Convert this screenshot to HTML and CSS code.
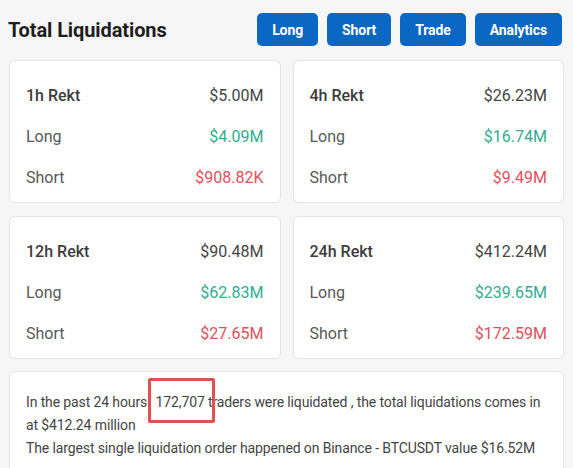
FILE: index.html
```html
<!DOCTYPE html>
<html>
<head>
<meta charset="utf-8">
<link rel="stylesheet" href="styles.css">
</head>
<body>
<div class="page">
  <header class="top">
    <h1 class="title">Total Liquidations</h1>
    <nav class="btns">
      <a class="btn">Long</a>
      <a class="btn">Short</a>
      <a class="btn">Trade</a>
      <a class="btn">Analytics</a>
    </nav>
  </header>
  <section class="grid">
    <div class="card">
      <div class="row head"><span>1h Rekt</span><span class="val">$5.00M</span></div>
      <div class="row"><span>Long</span><span class="val up">$4.09M</span></div>
      <div class="row"><span>Short</span><span class="val down">$908.82K</span></div>
    </div>
    <div class="card">
      <div class="row head"><span>4h Rekt</span><span class="val">$26.23M</span></div>
      <div class="row"><span>Long</span><span class="val up">$16.74M</span></div>
      <div class="row"><span>Short</span><span class="val down">$9.49M</span></div>
    </div>
    <div class="card">
      <div class="row head"><span>12h Rekt</span><span class="val">$90.48M</span></div>
      <div class="row"><span>Long</span><span class="val up">$62.83M</span></div>
      <div class="row"><span>Short</span><span class="val down">$27.65M</span></div>
    </div>
    <div class="card">
      <div class="row head"><span>24h Rekt</span><span class="val">$412.24M</span></div>
      <div class="row"><span>Long</span><span class="val up">$239.65M</span></div>
      <div class="row"><span>Short</span><span class="val down">$172.59M</span></div>
    </div>
  </section>
  <section class="summary">
    <p>In the past 24 hours <span class="hl">172,707</span> traders were liquidated , the total liquidations comes in at $412.24 million</p>
    <p>The largest single liquidation order happened on Binance - BTCUSDT value $16.52M</p>
    <div class="mark"></div>
  </section>
</div>
</body>
</html>
```

FILE: styles.css
```css
html, body {
  margin: 0;
  padding: 0;
  background: #f6f6f6;
}
body {
  font-family: Roboto, "Liberation Sans", sans-serif;
  color: #333;
  width: 573px;
  height: 468px;
  overflow: hidden;
}
.page {
  padding: 0 9px 0 9px;
}
.top {
  display: flex;
  align-items: center;
  justify-content: space-between;
  height: 58px;
  padding-top: 1px;
  box-sizing: border-box;
}
.title {
  margin: 0 0 0 -1px;
  font-size: 20px;
  font-weight: 700;
  color: #1e1e1e;
  letter-spacing: -0.1px;
}
.btns {
  display: flex;
  gap: 9px;
  margin-right: 2px;
}
.btn {
  display: flex;
  align-items: center;
  justify-content: center;
  height: 33px;
  padding: 0 15px;
  background: #0b67c4;
  color: #fff;
  font-size: 14px;
  font-weight: 700;
  letter-spacing: -0.1px;
  border-radius: 5px;
}
.grid {
  display: grid;
  grid-template-columns: 1fr 1fr;
  column-gap: 12px;
  row-gap: 13px;
  margin-top: 2px;
}
.card {
  background: #fff;
  border: 1px solid #e4e4e4;
  border-radius: 6px;
  padding: 14px 16px 4px 16px;
}
.row {
  display: flex;
  justify-content: space-between;
  align-items: center;
  height: 41px;
  font-size: 16px;
  color: #585858;
}
.row.head {
  color: #3c3c3c;
  font-weight: 500;
}
.val {
  color: #444;
  font-weight: 400;
}
.val.up { color: #2fae90; }
.val.down { color: #e0505c; }
.summary {
  position: relative;
  margin-top: 12px;
  background: #fff;
  border: 1px solid #e4e4e4;
  border-radius: 6px;
  padding: 19px 16px 20px 16px;
  font-size: 14px;
  line-height: 23px;
  letter-spacing: -0.12px;
  color: #444;
}
.summary p {
  margin: 0;
}
.hl {
  margin-left: 5px;
}
.mark {
  position: absolute;
  left: 138px;
  top: 6px;
  width: 61px;
  height: 39px;
  border: 3px solid #e05252;
  border-radius: 2px;
}
```
